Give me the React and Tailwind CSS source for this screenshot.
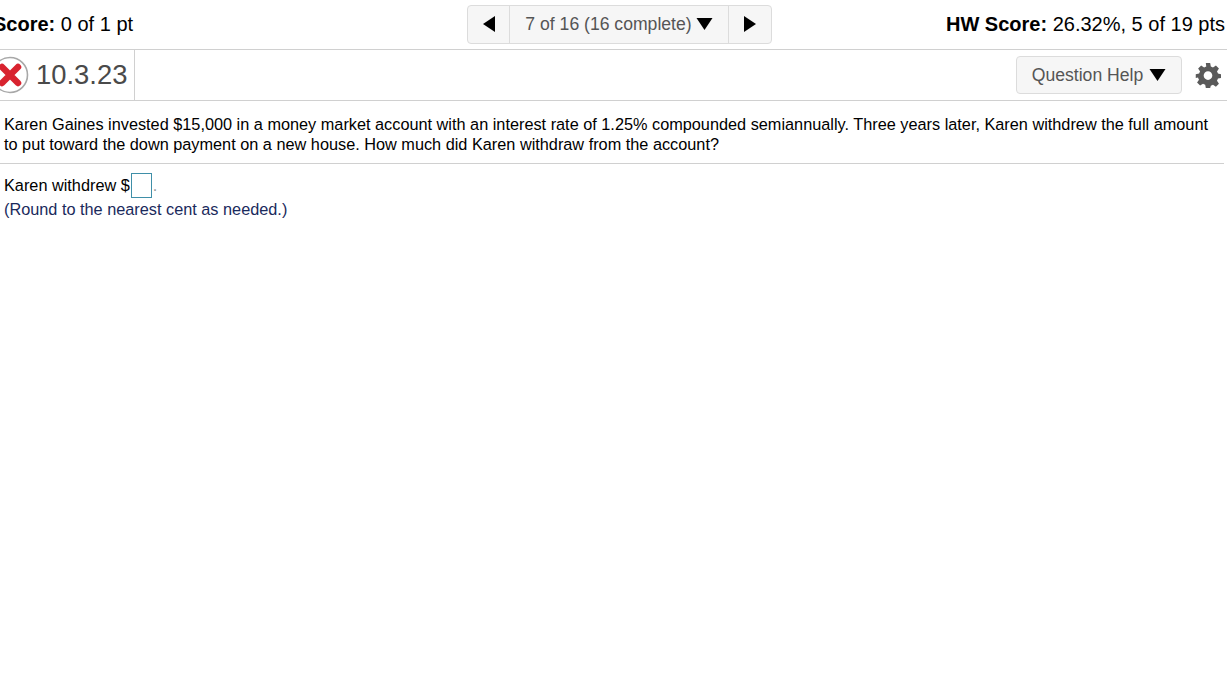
const Arrow = ({ dir, className }) => {
  const points = { left: '12,0 12,16 0,8', right: '0,0 12,8 0,16', down: '0,0 16,0 8,12' };
  const box = dir === 'down' ? '0 0 16 12' : '0 0 12 16';
  return (
    <svg viewBox={box} className={className} fill="#000">
      <polygon points={points[dir]} />
    </svg>
  );
};

const XBadge = () => (
  <svg viewBox="0 0 30 38" className="w-[30px] h-[38px] shrink-0">
    <circle cx="10" cy="19" r="17.500" fill="#fff" stroke="#a8a8a8" strokeWidth="1.600" />
    <path d="M2 11 L18 27 M18 11 L2 27" stroke="#d8232f" strokeWidth="6.500" strokeLinecap="round" />
  </svg>
);

const Gear = () => (
  <svg viewBox="0 0 24 24" className="w-[26px] h-[26px]" fill="#5a5a5a">
    <path
      fillRule="evenodd"
      d="M10 1h4l.6 3.1c.7.2 1.4.5 2 .9l2.700-1.800 2.800 2.800-1.800 2.700c.4.6.7 1.300.9 2l3.100.6v3.400l-3.100.6c-.2.700-.5 1.400-.9 2l1.800 2.700-2.800 2.800-2.700-1.800c-.6.400-1.300.700-2 .9L14 24h-4l-.6-3.100c-.7-.2-1.400-.5-2-.9l-2.700 1.800-2.800-2.800 1.800-2.700c-.4-.6-.7-1.300-.9-2L.7 14.700v-3.400l3.100-.6c.2-.7.5-1.400.9-2L2.900 6 5.700 3.200l2.700 1.800c.6-.4 1.300-.7 2-.9L10 1zm2 7.500a4 4 0 1 0 0 8 4 4 0 0 0 0-8z"
    />
  </svg>
);

export default function App() {
  return (
    <div className="w-[1227px] h-[683px] overflow-hidden bg-white text-black font-['Liberation_Sans',Arial,sans-serif]">
      <div className="h-[50px] border-b border-[#d0d0d0] flex items-center justify-between pr-[2px] pb-[1px]">
        <div className="text-[20px] w-[300px] -ml-[7px] whitespace-nowrap">
          <span className="font-bold">Score:</span> 0 of 1 pt
        </div>
        <div className="flex h-[39px] ml-[21px] rounded border border-[#dcdcdc] bg-[#f6f6f6]">
          <button className="w-[42px] flex items-center justify-center border-r border-[#dcdcdc]">
            <Arrow dir="left" className="w-[12px] h-[16px]" />
          </button>
          <button className="w-[219px] flex items-center justify-center gap-[4px] border-r border-[#dcdcdc] text-[17.600px] text-[#555]">
            7 of 16 (16 complete)
            <Arrow dir="down" className="w-[17px] h-[12px]" />
          </button>
          <button className="w-[42px] flex items-center justify-center">
            <Arrow dir="right" className="w-[12px] h-[16px]" />
          </button>
        </div>
        <div className="text-[20px] w-[300px] text-right whitespace-nowrap">
          <span className="font-bold">HW Score:</span> 26.32%, 5 of 19 pts
        </div>
      </div>

      <div className="h-[51px] border-b border-[#d0d0d0] flex items-center justify-between pr-[6px]">
        <div className="flex items-center h-full w-[135px] border-r border-[#d0d0d0]">
          <XBadge />
          <span className="text-[27.400px] text-[#4a4a4a] ml-[6px]">10.3.23</span>
        </div>
        <div className="flex items-center gap-[13px]">
          <button className="w-[166px] h-[38px] flex items-center justify-center gap-[6px] rounded border border-[#dcdcdc] bg-[#f6f6f6] text-[17.600px] text-[#555]">
            Question Help
            <Arrow dir="down" className="w-[17px] h-[12px]" />
          </button>
          <Gear />
        </div>
      </div>

      <div className="w-[1224px] border-b border-[#d0d0d0] pl-[4px] pt-[13px] pb-[9px] text-[16.300px] leading-[20px]">
        Karen Gaines invested $15,000 in a money market account with an interest rate of 1.25% compounded semiannually. Three years later, Karen withdrew the full amount to put toward the down payment on a new house. How much did Karen withdraw from the account?
      </div>

      <div className="pl-[4px] pt-[8px] text-[16.300px]">
        <div className="flex items-center h-[26px]">
          Karen withdrew $
          <span className="w-[21px] h-[25px] ml-[1px] border border-[#3f8fa8] bg-white" />
          <span className="ml-[1px] text-[#999]">.</span>
        </div>
        <div className="text-[#1a2a5c] leading-[20px] mt-[1px]">(Round to the nearest cent as needed.)</div>
      </div>
    </div>
  );
}
